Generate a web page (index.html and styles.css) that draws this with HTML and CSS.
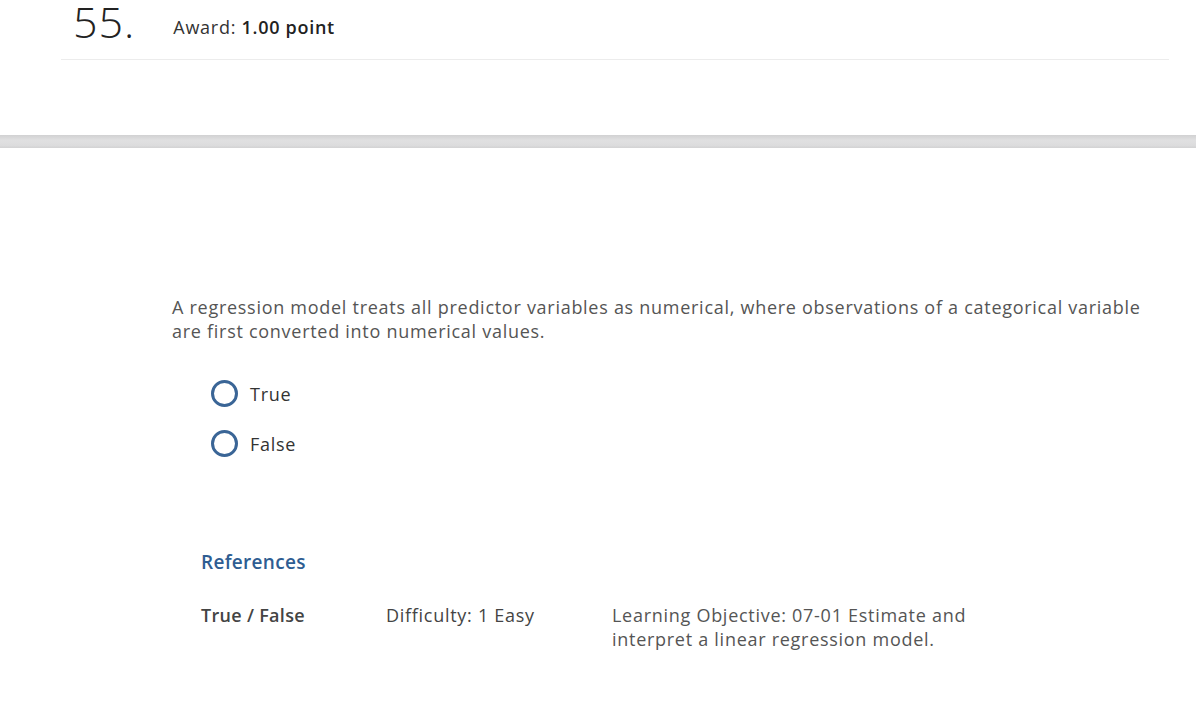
FILE: index.html
```html
<!DOCTYPE html>
<html>
<head>
<meta charset="utf-8">
<link rel="stylesheet" href="styles.css">
</head>
<body>
<div class="header">
  <div class="qnum">55.</div>
  <div class="award">Award: <b>1.00 point</b></div>
</div>
<div class="spacer"></div>
<div class="bar"></div>
<div class="content">
  <p class="prompt">A regression model treats all predictor variables as numerical, where observations of a categorical variable are first converted into numerical values.</p>
  <div class="options">
    <label class="option"><span class="radio"></span><span>True</span></label>
    <label class="option"><span class="radio"></span><span>False</span></label>
  </div>
  <div class="refs">
    <div class="refs-title">References</div>
    <div class="refs-row">
      <div class="ref-type">True / False</div>
      <div class="ref-diff">Difficulty: 1 Easy</div>
      <div class="ref-obj">Learning Objective: 07-01 Estimate and interpret a linear regression model.</div>
    </div>
  </div>
</div>
</body>
</html>
```

FILE: styles.css
```css
html, body {
  margin: 0;
  padding: 0;
  background: #fff;
  font-family: "Open Sans", "Liberation Sans", sans-serif;
  color: #333;
  letter-spacing: 0.72px;
}
.header {
  margin: 0 27px 0 61px;
  height: 59px;
  border-bottom: 1px solid #ececec;
  display: flex;
  align-items: flex-start;
}
.qnum {
  font-size: 43px;
  line-height: 44px;
  color: #222;
  margin: 0 38px 0 12px;
  font-weight: 300;
  letter-spacing: 1px;
}
.award {
  font-size: 18px;
  line-height: 24px;
  margin-top: 15px;
  color: #333;
}
.award b {
  font-weight: 600;
  color: #222;
}
.spacer {
  height: 75px;
}
.bar {
  height: 13px;
  background: linear-gradient(#d1d1d2, #e0e0e1 40%, #dcdcdd 80%, #d2d2d3);
}
.content {
  padding: 147px 40px 0 172px;
}
.prompt {
  margin: 0;
  font-size: 18px;
  line-height: 24px;
  color: #555;
}
.options {
  margin: 37px 0 0 39px;
  display: flex;
  flex-direction: column;
  gap: 23px;
}
.option {
  display: flex;
  align-items: center;
  gap: 12px;
  font-size: 18px;
  color: #333;
  height: 27px;
}
.radio {
  width: 21px;
  height: 21px;
  border: 3px solid #3a6596;
  border-radius: 50%;
}
.refs {
  margin: 93px 0 0 29px;
}
.refs-title {
  font-size: 19px;
  line-height: 24px;
  color: #2e5d92;
  font-weight: 600;
  letter-spacing: 0.3px;
}
.refs-row {
  display: flex;
  margin-top: 29px;
  font-size: 18px;
  line-height: 24px;
}
.ref-type {
  width: 185px;
  color: #444;
  font-weight: 600;
  letter-spacing: 0.3px;
}
.ref-diff {
  width: 226px;
  color: #444;
}
.ref-obj {
  width: 370px;
  color: #555;
}
```
